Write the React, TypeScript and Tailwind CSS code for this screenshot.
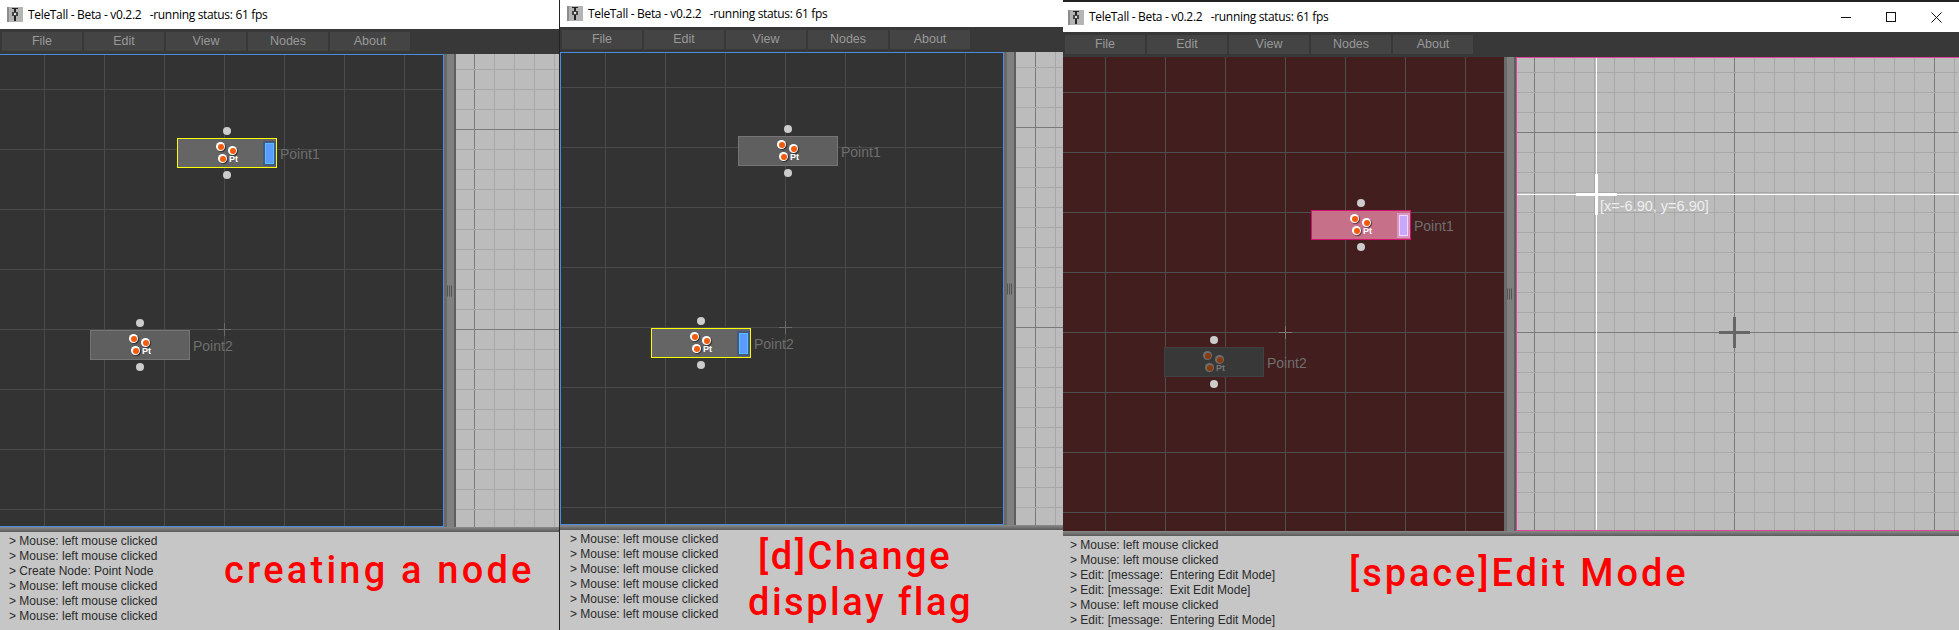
const titleText = 'TeleTall - Beta - v0.2.2\u00a0\u00a0\u00a0-running status: 61 fps';
const menus = ['File', 'Edit', 'View', 'Nodes', 'About'];

function AppIcon() {
  return (
    <svg width="16" height="15" viewBox="0 0 16 15" className="shrink-0">
      <rect width="16" height="15" fill="#b4b4b4" />
      <rect x="0" y="0" width="2" height="15" fill="#8c8c8c" />
      <rect x="5" y="1" width="6" height="1" fill="#222" />
      <rect x="7" y="1" width="2" height="13" fill="#222" />
      <rect x="5" y="5" width="6" height="4" fill="#444" />
      <rect x="7" y="6" width="2" height="2" fill="#ddd" />
    </svg>
  );
}

function WindowControls() {
  return (
    <div className="ml-auto flex items-center gap-[35px] pr-[17px]">
      <svg width="10" height="10" viewBox="0 0 10 10">
        <path d="M0 5.5H10" stroke="#111" strokeWidth="1" />
      </svg>
      <svg width="10" height="10" viewBox="0 0 10 10">
        <rect x="0.5" y="0.5" width="9" height="9" fill="none" stroke="#111" />
      </svg>
      <svg width="11" height="11" viewBox="0 0 11 11">
        <path d="M0.5 0.5L10.5 10.5M10.5 0.5L0.5 10.5" stroke="#111" />
      </svg>
    </div>
  );
}

function TitleBar({ cls, children }: { cls: string; children?: React.ReactNode }) {
  return (
    <div className={`flex shrink-0 items-center gap-[5px] bg-white font-['Open_Sans',sans-serif] text-[12px] tracking-[-0.32px] text-black ${cls}`}>
      <AppIcon />
      <span>{titleText}</span>
      {children}
    </div>
  );
}

function MenuBar() {
  return (
    <div className="flex h-[25px] shrink-0 gap-[2px] bg-[#383838] pl-[2px] pt-[3px]">
      {menus.map((m) => (
        <div key={m} className="flex h-[19px] w-[80px] items-center justify-center bg-[#444444] text-[12.5px] text-[#999999]">
          {m}
        </div>
      ))}
    </div>
  );
}

function CanvasGrid({ x0, color, w, h }: { x0: number; color: string; w: number; h: number }) {
  const xs = Array.from({ length: 7 }, (_, i) => x0 + i * 60);
  const ys = Array.from({ length: 8 }, (_, i) => 35 + i * 60);
  return (
    <svg className="absolute inset-0" width={w} height={h} shapeRendering="crispEdges">
      {xs.map((x) => (
        <line key={x} x1={x + 0.5} x2={x + 0.5} y1={0} y2={h} stroke={color} />
      ))}
      {ys.map((y) => (
        <line key={y} y1={y + 0.5} y2={y + 0.5} x1={0} x2={w} stroke={color} />
      ))}
    </svg>
  );
}

function PaneGrid({ x0, w, h }: { x0: number; w: number; h: number }) {
  const xs = Array.from({ length: 24 }, (_, i) => x0 + i * 20).filter((x) => x < w);
  const ys = Array.from({ length: 24 }, (_, i) => 15 + i * 20).filter((y) => y < h);
  return (
    <svg className="absolute inset-0" width={w} height={h} shapeRendering="crispEdges">
      {xs.map((x, i) => (
        <line key={x} x1={x + 0.5} x2={x + 0.5} y1={0} y2={h} stroke={i % 10 === 0 ? '#7b7b7b' : '#a8a8a8'} />
      ))}
      {ys.map((y, i) => (
        <line key={y} y1={y + 0.5} y2={y + 0.5} x1={0} x2={w} stroke={i % 10 === 3 ? '#7b7b7b' : '#a8a8a8'} />
      ))}
    </svg>
  );
}

type NodeKind = 'plain' | 'selected' | 'edit' | 'dim';

function OrangeDot({ cls, dim }: { cls: string; dim: boolean }) {
  return (
    <div
      className={`absolute flex h-[9px] w-[9px] items-center justify-center rounded-full ${cls} ${
        dim ? 'bg-[#6e6e6e]' : 'bg-white shadow-[1px_1px_1px_rgba(0,0,0,0.5)]'
      }`}
    >
      <div className={`h-[6px] w-[6px] rounded-full ${dim ? 'bg-[#8a3a10]' : 'bg-[#f25a0c]'}`} />
    </div>
  );
}

function GraphNode({ x, y, label, kind }: { x: number; y: number; label: string; kind: NodeKind }) {
  const box = {
    plain: 'bg-[#5f5f5f] border-[#757575]',
    selected: 'bg-[#656565] border-[#ffff00]',
    edit: 'bg-[#c7708a] border-[#d3126f]',
    dim: 'bg-[#383838] border-[#404040]',
  }[kind];
  const dim = kind === 'dim';
  return (
    <div className="absolute h-[30px] w-[100px]" style={{ left: x, top: y }}>
      <div className="absolute left-[46px] top-[-11px] h-[8px] w-[8px] rounded-full bg-[#cccccc]" />
      <div className="absolute left-[46px] top-[33px] h-[8px] w-[8px] rounded-full bg-[#cccccc]" />
      <div className={`absolute inset-0 border ${box}`} />
      <OrangeDot cls="left-[39px] top-[4px]" dim={dim} />
      <OrangeDot cls="left-[51px] top-[8px]" dim={dim} />
      <OrangeDot cls="left-[41px] top-[16px]" dim={dim} />
      <span className={`absolute left-[52px] top-[15px] text-[9px] leading-[12px] font-bold ${dim ? 'text-[#777777]' : 'text-white'}`}>
        Pt
      </span>
      {kind === 'selected' && (
        <div className="absolute left-[88px] top-[5px] h-[21px] w-[9px] border border-[#55c0ff] bg-[#5a9bff] shadow-[0_0_0_2px_#46597a]" />
      )}
      {kind === 'edit' && (
        <div className="absolute left-[88px] top-[5px] h-[21px] w-[9px] border border-[#f0d8ff] bg-[#c8a8ff] shadow-[0_0_0_2px_#d896c0]" />
      )}
      <span className="absolute left-[103px] top-[8px] text-[14px] leading-[16px] text-[#6e6e6e]">{label}</span>
    </div>
  );
}

function Splitter() {
  return (
    <div className="relative flex w-[12px] shrink-0 bg-[#808080]">
      <div className="w-[3px] bg-[#6a6a6a]" />
      <div className="flex-1" />
      <div className="w-[2px] bg-[#5e5e5e]" />
      <div className="absolute left-[3px] top-1/2 flex h-[11px] -translate-y-1/2 gap-[1px]">
        <div className="w-[1px] bg-[#555555]" />
        <div className="w-[1px] bg-[#555555]" />
        <div className="w-[1px] bg-[#555555]" />
      </div>
    </div>
  );
}

function LogPanel({ lines, gutter, children }: { lines: string[]; gutter: string; children: React.ReactNode }) {
  return (
    <div className="flex flex-1 overflow-hidden bg-[#c6c6c6] pt-[2px]">
      <div className={`shrink-0 whitespace-pre text-[12px] leading-[15px] text-[#2a2a2a] ${gutter}`}>
        {lines.map((l, i) => (
          <div key={i}>{l}</div>
        ))}
      </div>
      <div className="whitespace-nowrap font-['Roboto',sans-serif] text-[38px] font-medium text-[#ff0000]">{children}</div>
    </div>
  );
}

// small plus at the middle of the node canvas
function Plus({ cls, bar }: { cls: string; bar: string }) {
  return (
    <div className={`absolute h-[13px] w-[13px] ${cls}`}>
      <div className={`absolute left-0 top-[6px] h-[1px] w-[13px] ${bar}`} />
      <div className={`absolute left-[6px] top-0 h-[13px] w-[1px] ${bar}`} />
    </div>
  );
}

export default function App() {
  return (
    <div className="flex h-[630px] w-[1959px] overflow-hidden bg-white font-['Liberation_Sans',Arial,sans-serif]">
      {/* creating a node */}
      <div className="flex h-full w-[559px] shrink-0 flex-col">
        <TitleBar cls="h-[29px] pl-[7px]" />
        <MenuBar />
        <div className="flex h-[473px] shrink-0">
          <div className="relative w-[444px] shrink-0 bg-[#333333]">
            <CanvasGrid x0={44} color="#4a4a4a" w={444} h={473} />
            <Plus cls="left-[218px] top-[269px]" bar="bg-[#6a6a6a]" />
            <GraphNode x={177} y={84} label="Point1" kind="selected" />
            <GraphNode x={90} y={276} label="Point2" kind="plain" />
            <div className="pointer-events-none absolute inset-0 border-y border-r border-[#4c8ce0]" />
          </div>
          <Splitter />
          <div className="relative flex-1 bg-[#bcbcbc]">
            <PaneGrid x0={18} w={103} h={473} />
          </div>
        </div>
        <div className="h-[5px] shrink-0 bg-gradient-to-b from-[#8a8a8a] to-[#5a5a5a]" />
        <LogPanel
          gutter="w-[224px] pl-[9px]"
          lines={[
            '> Mouse: left mouse clicked',
            '> Mouse: left mouse clicked',
            '> Create Node: Point Node',
            '> Mouse: left mouse clicked',
            '> Mouse: left mouse clicked',
            '> Mouse: left mouse clicked',
          ]}
        >
          <div className="mt-[14px] leading-[45px] tracking-[3.2px]">creating a node</div>
        </LogPanel>
      </div>

      {/* change display flag */}
      <div className="flex h-full w-[504px] shrink-0 flex-col border-l border-[#222222]">
        <TitleBar cls="h-[27px] pl-[7px]" />
        <MenuBar />
        <div className="flex h-[473px] shrink-0">
          <div className="relative w-[444px] shrink-0 bg-[#333333]">
            <CanvasGrid x0={45} color="#4a4a4a" w={444} h={473} />
            <Plus cls="left-[219px] top-[269px]" bar="bg-[#6a6a6a]" />
            <GraphNode x={178} y={84} label="Point1" kind="plain" />
            <GraphNode x={91} y={276} label="Point2" kind="selected" />
            <div className="pointer-events-none absolute inset-0 border border-[#4c8ce0]" />
          </div>
          <Splitter />
          <div className="relative flex-1 bg-[#bcbcbc]">
            <PaneGrid x0={19} w={47} h={473} />
          </div>
        </div>
        <div className="h-[5px] shrink-0 bg-gradient-to-b from-[#8a8a8a] to-[#5a5a5a]" />
        <LogPanel
          gutter="w-[188px] pl-[10px]"
          lines={[
            '> Mouse: left mouse clicked',
            '> Mouse: left mouse clicked',
            '> Mouse: left mouse clicked',
            '> Mouse: left mouse clicked',
            '> Mouse: left mouse clicked',
            '> Mouse: left mouse clicked',
          ]}
        >
          <div className="mt-[1px] leading-[46px] tracking-[2.5px]">
            <div className="pl-[10px]">[d]Change</div>
            <div>display flag</div>
          </div>
        </LogPanel>
      </div>

      {/* edit mode */}
      <div className="flex h-full flex-1 flex-col border-t-2 border-[#222222]">
        <TitleBar cls="h-[30px] pl-[5px]">
          <WindowControls />
        </TitleBar>
        <MenuBar />
        <div className="flex h-[474px] shrink-0">
          <div className="relative w-[441px] shrink-0 bg-[#431e1e]">
            <CanvasGrid x0={42} color="#4e4e4e" w={441} h={474} />
            <Plus cls="left-[216px] top-[269px]" bar="bg-[#7a7a7a]" />
            <GraphNode x={248} y={153} label="Point1" kind="edit" />
            <GraphNode x={101} y={290} label="Point2" kind="dim" />
          </div>
          <Splitter />
          <div className="relative flex-1 overflow-hidden bg-[#bcbcbc]">
            <PaneGrid x0={18} w={442} h={474} />
            <div className="absolute bottom-0 left-[80px] top-0 w-[1px] bg-white" />
            <div className="absolute left-0 right-0 top-[137px] h-[1px] bg-white" />
            <div className="absolute left-[60px] top-[136px] h-[3px] w-[41px] bg-white" />
            <div className="absolute left-[79px] top-[117px] h-[41px] w-[3px] bg-white" />
            <span className="absolute left-[84px] top-[141px] text-[14.5px] leading-[16px] text-[#eeeeee]">[x=-6.90, y=6.90]</span>
            <div className="absolute left-[203px] top-[274px] h-[3px] w-[31px] bg-[#666666]" />
            <div className="absolute left-[217px] top-[260px] h-[31px] w-[3px] bg-[#666666]" />
            <div className="pointer-events-none absolute inset-0 border-y border-l border-[#e0449a]" />
          </div>
        </div>
        <div className="h-[5px] shrink-0 bg-gradient-to-b from-[#8a8a8a] to-[#5a5a5a]" />
        <LogPanel
          gutter="w-[286px] pl-[7px]"
          lines={[
            '> Mouse: left mouse clicked',
            '> Mouse: left mouse clicked',
            '> Edit: [message:  Entering Edit Mode]',
            '> Edit: [message:  Exit Edit Mode]',
            '> Mouse: left mouse clicked',
            '> Edit: [message:  Entering Edit Mode]',
          ]}
        >
          <div className="mt-[13px] leading-[45px] tracking-[2.9px]">[space]Edit Mode</div>
        </LogPanel>
      </div>
    </div>
  );
}
